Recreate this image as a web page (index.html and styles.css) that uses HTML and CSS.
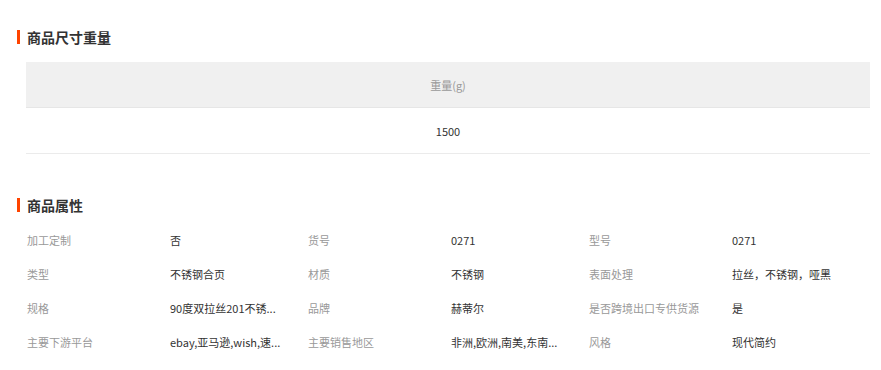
FILE: index.html
```html
<!DOCTYPE html>
<html lang="zh-CN">
<head>
    <meta charset="UTF-8">
    <meta name="viewport" content="width=device-width, initial-scale=1.0">
    <title>商品详情</title>
    <link rel="stylesheet" href="styles.css">
</head>
<body>
    <main class="detail">
        <section class="block">
            <h2 class="block-title">商品尺寸重量</h2>
            <table class="size-table">
                <thead>
                    <tr><th>重量(g)</th></tr>
                </thead>
                <tbody>
                    <tr><td>1500</td></tr>
                </tbody>
            </table>
        </section>
        <section class="block">
            <h2 class="block-title">商品属性</h2>
            <ul class="attr-list">
                <li class="attr"><span class="attr-name">加工定制</span><span class="attr-value">否</span></li>
                <li class="attr"><span class="attr-name">货号</span><span class="attr-value">0271</span></li>
                <li class="attr"><span class="attr-name">型号</span><span class="attr-value">0271</span></li>
                <li class="attr"><span class="attr-name">类型</span><span class="attr-value">不锈钢合页</span></li>
                <li class="attr"><span class="attr-name">材质</span><span class="attr-value">不锈钢</span></li>
                <li class="attr"><span class="attr-name">表面处理</span><span class="attr-value">拉丝，不锈钢，哑黑</span></li>
                <li class="attr"><span class="attr-name">规格</span><span class="attr-value">90度双拉丝201不锈...</span></li>
                <li class="attr"><span class="attr-name">品牌</span><span class="attr-value">赫蒂尔</span></li>
                <li class="attr"><span class="attr-name">是否跨境出口专供货源</span><span class="attr-value">是</span></li>
                <li class="attr"><span class="attr-name">主要下游平台</span><span class="attr-value">ebay,亚马逊,wish,速...</span></li>
                <li class="attr"><span class="attr-name">主要销售地区</span><span class="attr-value">非洲,欧洲,南美,东南...</span></li>
                <li class="attr"><span class="attr-name">风格</span><span class="attr-value">现代简约</span></li>
            </ul>
        </section>
    </main>
</body>
</html>
```

FILE: styles.css
```css
body {
    margin: 0;
    background-color: #fff;
    font-family: "Noto Sans CJK SC", "Noto Sans", sans-serif;
    color: #333;
}
.detail {
    padding: 30px 11px 0 17px;
}
.block + .block {
    margin-top: 44px;
}
.block-title {
    margin: 0;
    padding-left: 7px;
    border-left: 3px solid #ff4400;
    font-size: 14px;
    line-height: 14px;
    font-weight: bold;
    color: #333;
}
.size-table {
    width: calc(100% - 9px);
    margin: 18px 0 0 9px;
    border-collapse: collapse;
    font-size: 11px;
    text-align: center;
}
.size-table th {
    height: 45px;
    padding: 0;
    background-color: #f0f0f0;
    border-bottom: 1px solid #e6e6e6;
    font-weight: normal;
    color: #999;
}
.size-table td {
    height: 45px;
    padding: 0;
    border-bottom: 1px solid #ebebeb;
    color: #333;
}
.attr-list {
    display: grid;
    grid-template-columns: repeat(3, 1fr);
    margin: 11px 0 0 10px;
    padding: 0;
    list-style: none;
    font-size: 11px;
}
.attr {
    display: flex;
    height: 34px;
    line-height: 34px;
}
.attr-name {
    width: 143px;
    flex-shrink: 0;
    color: #999;
}
.attr-value {
    white-space: nowrap;
    color: #333;
}
```
